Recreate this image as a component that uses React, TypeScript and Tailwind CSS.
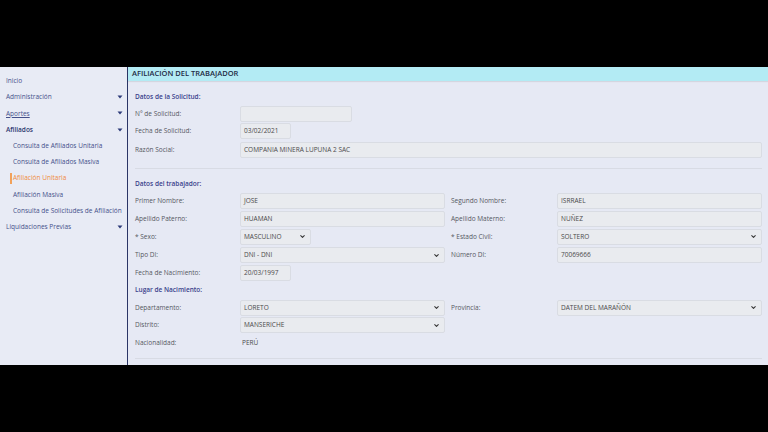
import { ChevronDown } from "lucide-react";

const sideItems = [
  { label: "Inicio", caret: false },
  { label: "Administración", caret: true },
  { label: "Aportes", caret: true, underline: true },
  { label: "Afiliados", caret: true, strong: true },
  { label: "Consulta de Afiliados Unitaria", sub: true },
  { label: "Consulta de Afiliados Masiva", sub: true },
  { label: "Afiliación Unitaria", sub: true, active: true },
  { label: "Afiliación Masiva", sub: true },
  { label: "Consulta de Solicitudes de Afiliación", sub: true },
  { label: "Liquidaciones Previas", caret: true },
];

function Caret() {
  return (
    <svg width="6" height="4" viewBox="0 0 6 4" className="shrink-0">
      <path d="M0.5 0.5 L5.5 0.5 L3 3.5 Z" fill="#2c3a78" />
    </svg>
  );
}

function Field({ value, w, select }: { value?: string; w: string; select?: boolean }) {
  return (
    <div
      className={`${w} h-[16px] flex items-center justify-between rounded-[2px] border border-[#d9dce3] bg-[#e9ebef] pl-[3px] pr-[4px] text-[6.5px] text-[#4a4a4a]`}
    >
      <span>{value}</span>
      {select && <ChevronDown size={7} strokeWidth={3.5} color="#333" />}
    </div>
  );
}

function Label({ children }: { children: React.ReactNode }) {
  return <div className="text-[6.5px] text-[#55585f]">{children}</div>;
}

function Row({
  h,
  label,
  field,
  label2,
  field2,
}: {
  h: string;
  label: string;
  field: React.ReactNode;
  label2?: string;
  field2?: React.ReactNode;
}) {
  return (
    <div className={`${h} grid grid-cols-[105px_211px_106px_205px] items-center`}>
      <Label>{label}</Label>
      <div className="flex items-center">{field}</div>
      <Label>{label2}</Label>
      <div className="flex items-center">{field2}</div>
    </div>
  );
}

function Title({ h, children }: { h: string; children: React.ReactNode }) {
  return (
    <div className={`${h} flex items-center text-[6.5px] font-semibold text-[#3a428c]`}>
      {children}
    </div>
  );
}

export default function App() {
  return (
    <div className="w-[768px] h-[432px] bg-black flex flex-col" style={{ fontFamily: '"Open Sans", "Noto Sans", sans-serif' }}>
      <div className="h-[67px] shrink-0" />
      <div className="h-[298px] shrink-0 flex overflow-hidden bg-[#e6e9f4]">
        {/* Sidebar */}
        <aside className="w-[128px] shrink-0 border-r border-[#2b3566] bg-[#e8ebf5] pt-[6px]">
          {sideItems.map((item) => (
            <div
              key={item.label}
              className={`relative h-[16.2px] flex items-center justify-between pr-[4px] text-[6.5px] ${
                item.sub ? "pl-[13px]" : "pl-[6px]"
              } ${item.active ? "text-[#f08a3a]" : item.strong ? "font-semibold text-[#2c3770]" : "text-[#44508a]"}`}
            >
              {item.active && <span className="absolute left-[10px] top-[3px] h-[11px] w-[2px] bg-[#f2a15a]" />}
              <span className={item.underline ? "underline" : ""}>{item.label}</span>
              {item.caret && <Caret />}
            </div>
          ))}
        </aside>

        {/* Main */}
        <main className="flex-1 flex flex-col">
          <div className="h-[14px] shrink-0 flex items-center pl-[4px] bg-[#b3ebf4] shadow-[0_1px_1px_rgba(0,0,0,0.08)] text-[7.5px] font-semibold text-[#222a44]">
            AFILIACIÓN DEL TRABAJADOR
          </div>
          <div className="pl-[7px] pr-[6px] pt-[8px]">
            <Title h="h-[16px]">Datos de la Solicitud:</Title>
            <Row h="h-[17px]" label="N° de Solicitud:" field={<Field w="w-[112px]" />} />
            <Row h="h-[18px]" label="Fecha de Solicitud:" field={<Field w="w-[51px]" value="03/02/2021" />} />
            <div className="h-[20px] grid grid-cols-[105px_1fr] items-center">
              <Label>Razón Social:</Label>
              <Field w="w-full" value="COMPANIA MINERA LUPUNA 2 SAC" />
            </div>
            <div className="h-[8px]" />
            <div className="h-px bg-[#d8dbe4]" />
            <div className="h-[7px]" />
            <Title h="h-[16px]">Datos del trabajador:</Title>
            <Row
              h="h-[18px]"
              label="Primer Nombre:"
              field={<Field w="w-[205px]" value="JOSE" />}
              label2="Segundo Nombre:"
              field2={<Field w="w-[205px]" value="ISRRAEL" />}
            />
            <Row
              h="h-[17px]"
              label="Apellido Paterno:"
              field={<Field w="w-[205px]" value="HUAMAN" />}
              label2="Apellido Materno:"
              field2={<Field w="w-[205px]" value="NUÑEZ" />}
            />
            <Row
              h="h-[19px]"
              label="* Sexo:"
              field={<Field w="w-[71px]" value="MASCULINO" select />}
              label2="* Estado Civil:"
              field2={<Field w="w-[205px]" value="SOLTERO" select />}
            />
            <Row
              h="h-[18px]"
              label="Tipo DI:"
              field={<Field w="w-[205px]" value="DNI - DNI" select />}
              label2="Número DI:"
              field2={<Field w="w-[205px]" value="70069666" />}
            />
            <Row h="h-[17px]" label="Fecha de Nacimiento:" field={<Field w="w-[51px]" value="20/03/1997" />} />
            <Title h="h-[18px]">Lugar de Nacimiento:</Title>
            <Row
              h="h-[17px]"
              label="Departamento:"
              field={<Field w="w-[205px]" value="LORETO" select />}
              label2="Provincia:"
              field2={<Field w="w-[205px]" value="DATEM DEL MARAÑÓN" select />}
            />
            <Row h="h-[18px]" label="Distrito:" field={<Field w="w-[205px]" value="MANSERICHE" select />} />
            <Row
              h="h-[17px]"
              label="Nacionalidad:"
              field={<span className="pl-[2px] text-[6.5px] text-[#4a4a4a]">PERÚ</span>}
            />
            <div className="h-[7px]" />
            <div className="h-px bg-[#d8dbe4]" />
          </div>
        </main>
      </div>
      <div className="flex-1" />
    </div>
  );
}
